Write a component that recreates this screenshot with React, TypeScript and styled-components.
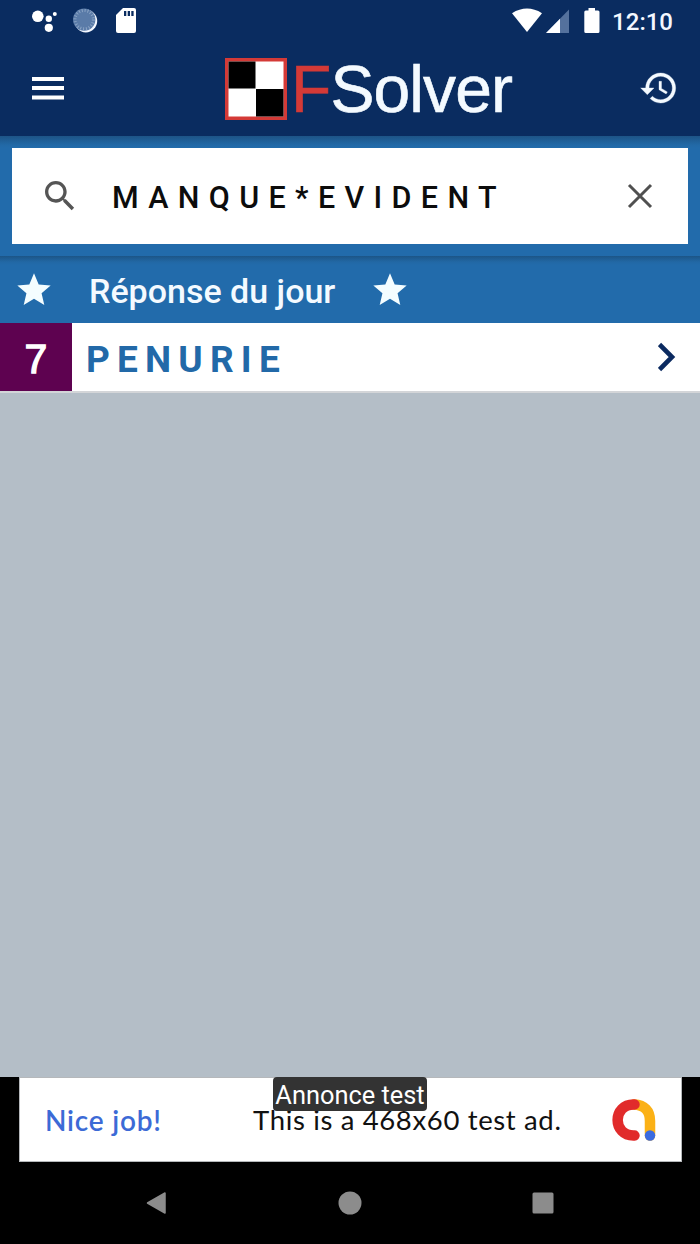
import React from "react";
import styled, { createGlobalStyle } from "styled-components";

const GlobalStyle = createGlobalStyle`
  * { box-sizing: border-box; }
  body { margin: 0; background: #000; font-family: Roboto, "Liberation Sans", sans-serif; }
`;

const Screen = styled.div`
  width: 700px;
  height: 1244px;
  display: flex;
  flex-direction: column;
  overflow: hidden;
  background: #b4bec7;
`;

const StatusBar = styled.div`
  height: 42px;
  flex: none;
  display: flex;
  align-items: center;
  justify-content: space-between;
  background: #0a2c60;
`;

const StatusText = styled.span`
  padding-top: 2px;
  color: #f4f8ff;
  font-size: 24px;
  font-weight: 500;
  line-height: 42px;
`;

const StatusGroup = styled.div<{ $left?: number; $right?: number }>`
  display: flex;
  align-items: center;
  height: 42px;
  padding-left: ${(p) => p.$left ?? 0}px;
  padding-right: ${(p) => p.$right ?? 0}px;
`;

const AppBar = styled.header`
  height: 94px;
  flex: none;
  display: flex;
  align-items: center;
  justify-content: space-between;
  padding: 0 21px 0 32px;
  background: #0a2c60;
`;

const IconButton = styled.button`
  display: flex;
  padding: 0 0 2px;
  border: 0;
  background: none;
`;

const Brand = styled.div`
  display: flex;
  align-items: center;
  height: 94px;
  width: 290px;
  margin-left: 37px;
`;

const BrandName = styled.span`
  margin-left: 4px;
  font-family: "Liberation Sans", Arial, sans-serif;
  font-size: 66px;
  line-height: 94px;
  letter-spacing: -0.9px;
  color: #f4faff;
  -webkit-text-stroke: 0.6px currentColor;
  white-space: nowrap;
`;

const BrandInitial = styled.span`
  color: #d43a37;
`;

const SearchBand = styled.div`
  height: 120px;
  flex: none;
  padding: 12px 12px 0;
  background: linear-gradient(#1d5487 0, #2269a6 9px, #226bab 12px);
`;

const SearchBox = styled.div`
  height: 96px;
  display: flex;
  align-items: center;
  padding: 0 30px 0 28px;
  background: #fff;
`;

const SearchText = styled.span`
  flex: 1;
  margin-left: 32px;
  padding-top: 2px;
  font-size: 30.5px;
  font-weight: 500;
  letter-spacing: 9.35px;
  color: #0c0c0c;
  white-space: nowrap;
`;

const SectionTitle = styled.div`
  height: 67px;
  flex: none;
  display: flex;
  align-items: center;
  padding-left: 14px;
  background: linear-gradient(#1c5587 0, #2268a5 6px, #226bab 9px);
`;

const SectionText = styled.h1`
  width: 246px;
  margin: 3px 35px 0 35px;
  font-size: 34px;
  font-weight: 500;
  color: #f4faff;
  white-space: nowrap;
`;

const ResultRow = styled.div`
  height: 70px;
  flex: none;
  display: flex;
  background: #fff;
  border-bottom: 2px solid #d3d5d8;
`;

const LengthCell = styled.div`
  width: 72px;
  display: flex;
  align-items: center;
  justify-content: center;
  padding-top: 4px;
  background: #5e0250;
  color: #fff;
  font-family: "Liberation Sans", Arial, sans-serif;
  font-size: 41px;
  -webkit-text-stroke: 1.3px #fff;
`;

const Answer = styled.div`
  flex: 1;
  padding: 2px 0 0 14px;
  line-height: 69px;
  font-size: 37px;
  font-weight: 700;
  letter-spacing: 7.2px;
  color: #2269a8;
`;

const RowArrow = styled.div`
  display: flex;
  align-items: center;
  padding-right: 22px;
`;

const Empty = styled.main`
  flex: 1;
`;

const AdSlot = styled.div`
  position: relative;
  height: 85px;
  flex: none;
  padding: 0 18px 0 19px;
  background: #000;
`;

const Ad = styled.div`
  height: 85px;
  display: flex;
  align-items: center;
  padding: 0 25px 0 25px;
  border: 1px solid #b5b8bb;
  background: #fff;
  font-family: Lato, "Open Sans", sans-serif;
`;

const AdLead = styled.span`
  width: 208px;
  font-size: 28px;
  font-weight: 600;
  letter-spacing: 0.8px;
  color: #3c6ad6;
  white-space: nowrap;
`;

const AdCopy = styled.span`
  flex: 1;
  font-size: 27.5px;
  letter-spacing: 0.65px;
  color: #111;
  white-space: nowrap;
`;

const AdLabel = styled.div`
  position: absolute;
  left: 273px;
  top: 0;
  width: 154px;
  height: 34px;
  padding-top: 1px;
  border-radius: 4px;
  background: #333;
  color: #fff;
  font-size: 25.4px;
  line-height: 34px;
  text-align: center;
  white-space: nowrap;
`;

const NavBar = styled.nav`
  height: 82px;
  flex: none;
  display: flex;
  align-items: center;
  justify-content: space-between;
  padding: 0 146px 0 145px;
  background: #000;
`;

const Star = () => (
  <svg width="40" height="40" viewBox="0 0 24 24" fill="#f4fdff">
    <path d="M12 17.27L18.18 21l-1.64-7.03L22 9.24l-7.19-.61L12 2 9.19 8.63 2 9.24l5.46 4.73L5.82 21z" />
  </svg>
);

export default function App() {
  return (
    <>
      <GlobalStyle />
      <Screen>
        <StatusBar>
          <StatusGroup $left={30}>
            <svg width="110" height="42" viewBox="30 0 110 42">
              <g fill="#fff">
                <circle cx="37.8" cy="16.3" r="5.8" />
                <circle cx="48.8" cy="18.8" r="3.2" />
                <circle cx="54.8" cy="14" r="2" />
                <circle cx="48.8" cy="27.8" r="4.1" />
              </g>
              <circle cx="85.8" cy="21" r="11.4" fill="#f4f8ff" />
              <circle cx="84.2" cy="19.6" r="11.2" fill="#5a7ba8" />
              <circle cx="84.2" cy="19.6" r="9.2" fill="none" stroke="#8ba4c5" strokeWidth="3" strokeDasharray="1 1.9" />
              <path d="M123 8h11q2 0 2 2v21q0 2-2 2h-16q-2 0-2-2V15z" fill="#fff" />
              <path d="M124 11h2.3v5H124zM127.700 11h2.300v5h-2.300zM131.300 11h2.300v5h-2.300z" fill="#0a2c60" />
            </svg>
          </StatusGroup>
          <StatusGroup $right={27}>
            <svg width="102" height="42" viewBox="510 0 102 42">
              <path d="M512 13.200Q527 4 542 13.200L527 32z" fill="#fff" />
              <path d="M569 9.500V33h-23z" fill="#54719d" />
              <path d="M560 18.700V33h-14z" fill="#fff" />
              <path d="M588.500 8h6.500v2.500h3q1.500 0 1.500 1.500v19.500q0 1.500-1.500 1.500h-12.200q-1.500 0-1.500-1.500V12q0-1.500 1.500-1.500h2.700z" fill="#fff" />
            </svg>
            <StatusText>12:10</StatusText>
          </StatusGroup>
        </StatusBar>

        <AppBar>
          <IconButton aria-label="Menu">
            <svg width="32" height="26" viewBox="0 0 32 26" fill="#fff">
              <path d="M0 2h32v4H0zM0 11h32v4H0zM0 20.500h32v4H0z" />
            </svg>
          </IconButton>
          <Brand>
            <svg width="62" height="62" viewBox="0 0 62 62">
              <rect width="62" height="62" fill="#d43a37" />
              <rect x="3.500" y="3.500" width="55" height="55" fill="#fff" />
              <path d="M3.500 3.500h27v27h-27zM31 31h27.500v27.500H31z" fill="#000" />
            </svg>
            <BrandName>
              <BrandInitial>F</BrandInitial>Solver
            </BrandName>
          </Brand>
          <IconButton aria-label="Historique">
            <svg width="40" height="40" viewBox="0 0 24 24" fill="#f4faff" stroke="#f4faff" strokeWidth="0.200">
              <path d="M13 3c-4.970 0-9 4.030-9 9H1l3.890 3.890.070.140L9 12H6c0-3.870 3.130-7 7-7s7 3.130 7 7-3.130 7-7 7c-1.930 0-3.680-.790-4.940-2.060l-1.420 1.420C8.270 19.990 10.510 21 13 21c4.970 0 9-4.030 9-9s-4.030-9-9-9zm-1 5v5l4.280 2.540.720-1.210-3.500-2.080V8H12z" />
            </svg>
          </IconButton>
        </AppBar>

        <SearchBand>
          <SearchBox>
            <svg width="40" height="40" viewBox="0 0 24 24" fill="#555">
              <path d="M15.500 14h-.790l-.280-.270C15.410 12.590 16 11.110 16 9.500 16 5.910 13.090 3 9.500 3S3 5.910 3 9.500 5.910 16 9.500 16c1.610 0 3.090-.590 4.230-1.570l.270.280v.790l5 4.990L20.490 19l-4.990-5zm-6 0C7.010 14 5 11.990 5 9.500S7.010 5 9.500 5 14 7.010 14 9.500 11.990 14 9.500 14z" />
            </svg>
            <SearchText>MANQUE*EVIDENT</SearchText>
            <svg width="36" height="36" viewBox="0 0 36 36" stroke="#505050" strokeWidth="3">
              <path d="M7 7l22 22M29 7L7 29" />
            </svg>
          </SearchBox>
        </SearchBand>

        <SectionTitle>
          <Star />
          <SectionText>Réponse du jour</SectionText>
          <Star />
        </SectionTitle>

        <ResultRow>
          <LengthCell>7</LengthCell>
          <Answer>PENURIE</Answer>
          <RowArrow>
            <svg width="20" height="30" viewBox="0 0 20 30" fill="none" stroke="#0b2a60" strokeWidth="4.600">
              <path d="M1.500 2.500L14 15 1.500 27.500" />
            </svg>
          </RowArrow>
        </ResultRow>

        <Empty />

        <AdSlot>
          <Ad>
            <AdLead>Nice job!</AdLead>
            <AdCopy>This is a 468x60 test ad.</AdCopy>
            <svg width="44" height="44" viewBox="0 0 44 44" fill="none" strokeWidth="10.500" strokeLinecap="round">
              <path d="M22 6.500Q38 7.500 38 23V37.500" stroke="#fbb116" />
              <path d="M22.500 6.500C0 5.500 0 38.500 22.500 37.500" stroke="#e12b2b" />
              <circle cx="38" cy="37.500" r="5.200" fill="#3b6be0" />
            </svg>
          </Ad>
          <AdLabel>Annonce test</AdLabel>
        </AdSlot>

        <NavBar>
          <svg width="22" height="24" viewBox="0 0 22 24">
            <path d="M2.500 12L20 2v20z" fill="#8c8c8c" stroke="#8c8c8c" strokeWidth="1.500" strokeLinejoin="round" />
          </svg>
          <svg width="24" height="24" viewBox="0 0 24 24">
            <circle cx="12" cy="12" r="11.500" fill="#8c8c8c" />
          </svg>
          <svg width="22" height="22" viewBox="0 0 22 22">
            <rect x="0.500" y="0.500" width="21" height="21" rx="1.500" fill="#8c8c8c" />
          </svg>
        </NavBar>
      </Screen>
    </>
  );
}
